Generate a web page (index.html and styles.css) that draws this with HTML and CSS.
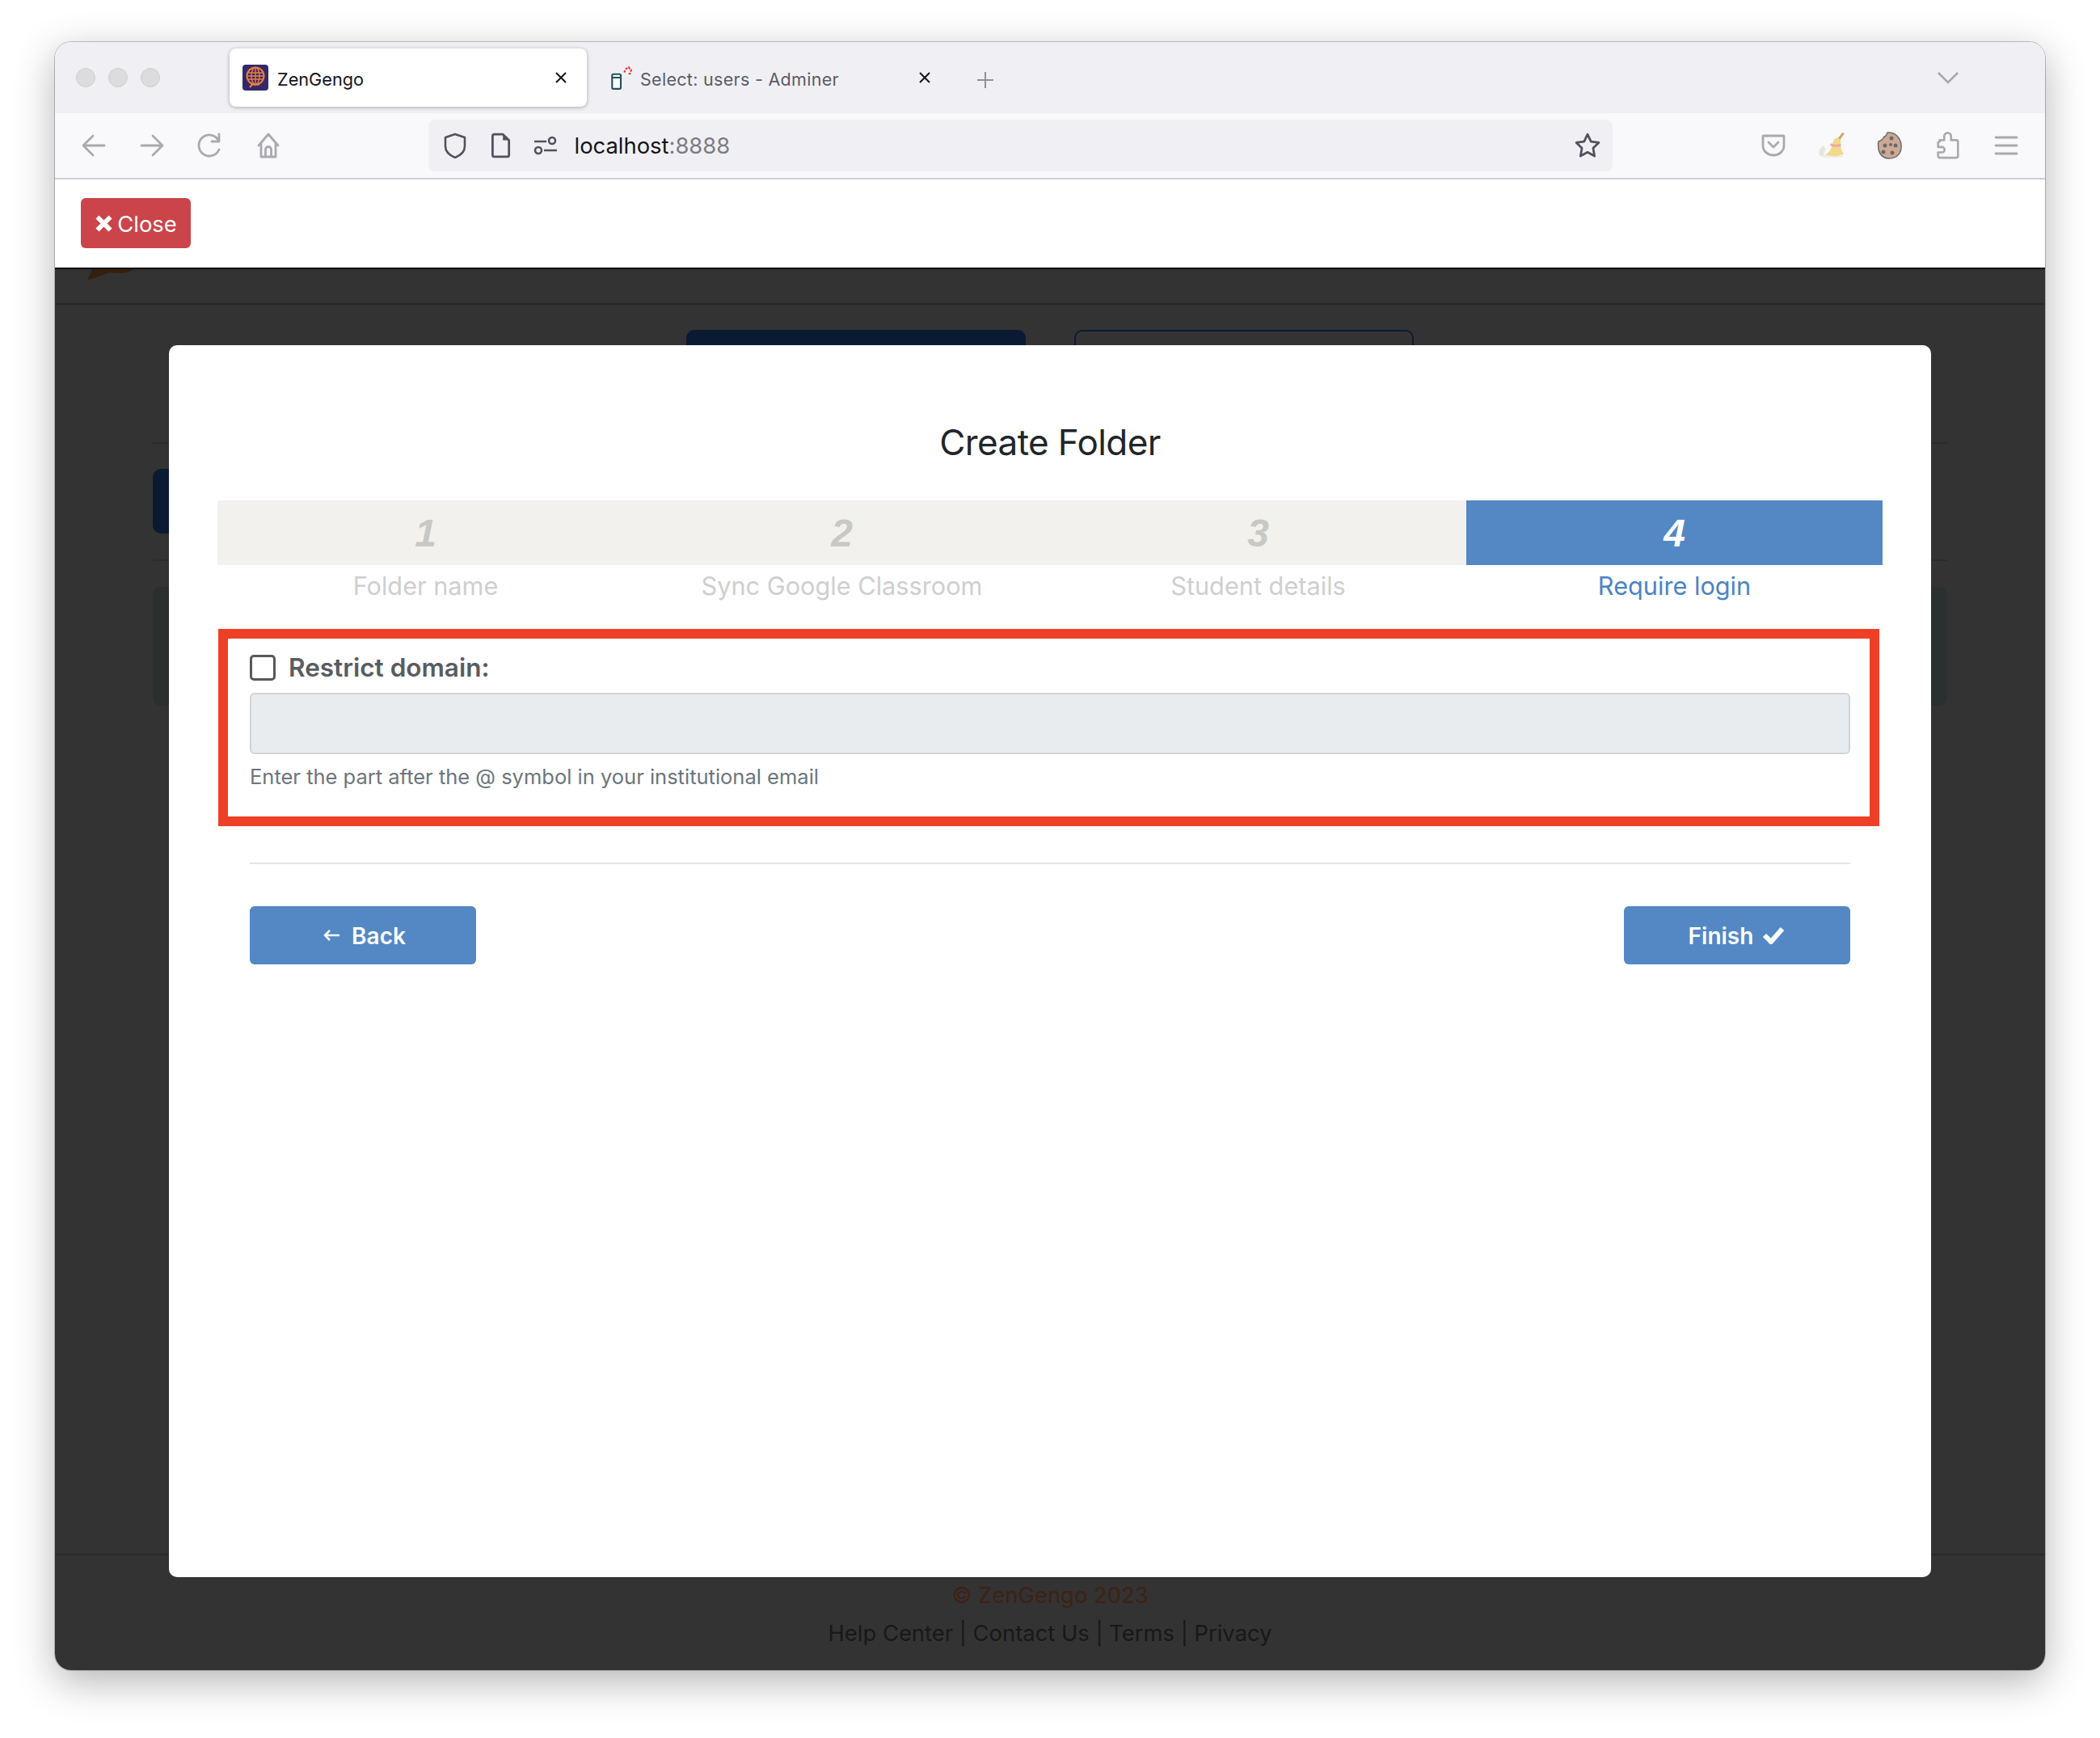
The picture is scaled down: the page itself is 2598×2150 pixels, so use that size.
FILE: index.html
```html
<!DOCTYPE html>
<html lang="en">
<head>
<meta charset="utf-8">
<title>ZenGengo</title>
<link rel="stylesheet" href="styles.css">
</head>
<body>
<div class="window">
  <div class="tabstrip">
    <div class="lights"><span class="light"></span><span class="light"></span><span class="light"></span></div>
    <div class="tab tab-active">
      <svg class="favicon" viewBox="0 0 32 32">
        <rect width="32" height="32" rx="4" fill="#33296a"/>
        <circle cx="16" cy="14" r="10.5" fill="none" stroke="#ee7f3a" stroke-width="2"/>
        <ellipse cx="16" cy="14" rx="5" ry="10.5" fill="none" stroke="#ee7f3a" stroke-width="1.4"/>
        <path d="M6 10h20M5.500 14h21M6 18h20M16 3.500v21" stroke="#ee7f3a" stroke-width="1.400" fill="none"/>
        <path d="M9 28l3-3.500h9" stroke="#ee7f3a" stroke-width="2" fill="none"/>
      </svg>
      <span class="tab-title">ZenGengo</span>
      <svg class="tab-x" viewBox="0 0 16 16"><path d="M2 2l12 12M14 2L2 14"/></svg>
    </div>
    <div class="tab tab-idle">
      <svg class="favicon-db" viewBox="0 0 28 28">
        <rect x="4" y="10" width="10" height="17" rx="1.500" fill="#fff" stroke="#23505f" stroke-width="2"/>
        <path d="M4 14h10" stroke="#23505f" stroke-width="2"/>
        <path d="M18 8l2-4 3-2 3 3-1 4-2 1" fill="none" stroke="#e5312f" stroke-width="2" stroke-dasharray="2.500 1.500"/>
      </svg>
      <span class="tab-title tab-title-idle">Select: users - Adminer</span>
      <svg class="tab-x" viewBox="0 0 16 16"><path d="M2 2l12 12M14 2L2 14"/></svg>
    </div>
    <svg class="plus" viewBox="0 0 24 24"><path d="M12 2v20M2 12h20"/></svg>
    <svg class="chevron" viewBox="0 0 26 16"><path d="M1 2l12 12L25 2"/></svg>
  </div>

  <div class="toolbar">
    <div class="icon-group">
      <svg class="tool" viewBox="0 0 32 32"><path d="M29 16H4M15 4L3 16l12 12"/></svg>
      <svg class="tool" viewBox="0 0 32 32"><path d="M3 16h25M17 4l12 12-12 12"/></svg>
      <svg class="tool" viewBox="0 0 32 32"><path d="M27 21a13 13 0 1 1-1-12M27 2v9h-9" /></svg>
      <svg class="tool" viewBox="0 0 32 32"><path d="M4 16L16 2l12 14M7 13v17h18V13M12.500 30v-9a3.500 3.500 0 0 1 7 0v9"/></svg>
    </div>
    <div class="urlbar">
      <svg class="url-icon" viewBox="0 0 30 32"><path d="M15 2l12 4v11c0 6-5 11-12 14C8 28 3 23 3 17V6z"/></svg>
      <svg class="url-icon" viewBox="0 0 24 30"><path d="M3 4a2 2 0 0 1 2-2h10l7 7v17a2 2 0 0 1-2 2H5a2 2 0 0 1-2-2z"/><path class="url-fill" d="M15 2l7 7h-7z"/></svg>
      <svg class="url-icon" viewBox="0 0 30 24"><path d="M1 7h15M13 18h16"/><circle cx="23" cy="6" r="4"/><circle cx="6" cy="18" r="4"/></svg>
      <span class="address"><span class="host">localhost</span><span class="port">:8888</span></span>
      <svg class="star" viewBox="1 1 30 30"><path d="M16 3l4 8.500 9 1.200-6.500 6.400 1.600 9.100L16 23.800 7.900 28.200l1.600-9.100L3 12.700l9-1.200z"/></svg>
    </div>
    <div class="icon-group">
      <svg class="tool" viewBox="0 0 32 32"><path d="M4 4h24a1 1 0 0 1 1 1v11c0 7-6 12-13 12S3 23 3 16V5a1 1 0 0 1 1-1zM10 12l6 6 6-6"/></svg>
      <svg class="ext" viewBox="0 0 34 36">
        <path d="M1 31c-2-5 1-10 5-13l3 4-3 11z" fill="#e2e8df"/>
        <ellipse cx="18" cy="32" rx="14" ry="2.500" fill="#eceee6"/>
        <path d="M34 2l-7 10-3-2 7-9z" fill="#cfa862"/>
        <path d="M23 8c3 0 6 2 6 5l0 5c0 4 1 8 4 11-2 1-3 2-5 1-1 2-3 1-5 2-2 0-3-1-5 0-2 0-3-1-5-1-1 0-3 0-4-1 5-3 8-8 9-14 1-4 2-7 5-8z" fill="#f0d88e"/>
        <path d="M16 15c4 2 8 2 13 1l0 3c-5 1-10 1-14-1z" fill="#eba8a0"/>
      </svg>
      <svg class="ext" viewBox="0 0 32 36">
        <path d="M13 2c-1 3-2 5-4 5-1 3-4 5-7 6-2 12 3 21 13 21 11 0 16-8 15-17C29 8 22 1 13 2z" fill="#cda995" stroke="#6a6a6e" stroke-width="1.500"/>
        <circle cx="18" cy="9" r="2.500" fill="#6a6a6e"/><circle cx="10" cy="18" r="2.500" fill="#6a6a6e"/><circle cx="23" cy="18" r="2.500" fill="#6a6a6e"/><circle cx="8" cy="26" r="2.500" fill="#6a6a6e"/><circle cx="19" cy="27" r="2.500" fill="#6a6a6e"/><circle cx="17" cy="17" r="2" fill="#6a6a6e"/>
      </svg>
      <svg class="tool" viewBox="0 0 32 36"><path d="M5 11h6V6a4.500 4.500 0 0 1 9 0v5h7a2 2 0 0 1 2 2v19a2 2 0 0 1-2 2H5a2 2 0 0 1-2-2v-5h5a3.500 3.500 0 0 0 0-7H3v-5a2 2 0 0 1 2-2z"/></svg>
      <svg class="tool" viewBox="0 0 32 32"><path d="M3 6h26M3 16h26M3 26h26"/></svg>
    </div>
  </div>

  <div class="closebar">
    <button class="btn-close" type="button">
      <svg class="close-x" viewBox="0 0 20 20"><path d="M3 3l14 14M17 3L3 17"/></svg><span class="btn-text">Close</span>
    </button>
  </div>

  <div class="page">
    <div class="bg-nav">
      <svg class="bg-logo" viewBox="0 0 58 14"><path d="M0 14L6 0h52c-8 5-18 6-30 4z"/></svg>
    </div>
    <div class="bg-main">
      <div class="bg-tabs">
        <div class="bg-tab bg-tab-solid"></div>
        <div class="bg-tab bg-tab-outline"></div>
      </div>
      <div class="bg-rule-block">
        <div class="bg-action"></div>
      </div>
      <div class="bg-card"></div>
    </div>
    <footer class="bg-footer">
      <div class="copyright">© ZenGengo 2023</div>
      <div class="links">Help Center | Contact Us | Terms | Privacy</div>
    </footer>

    <section class="modal">
      <h1 class="modal-title">Create Folder</h1>
      <div class="steps">
        <div class="step"><div class="step-num">1</div><div class="step-label">Folder name</div></div>
        <div class="step"><div class="step-num">2</div><div class="step-label">Sync Google Classroom</div></div>
        <div class="step"><div class="step-num">3</div><div class="step-label">Student details</div></div>
        <div class="step step-active"><div class="step-num">4</div><div class="step-label">Require login</div></div>
      </div>
      <div class="highlight">
        <label class="check-row"><input class="check" type="checkbox"><span>Restrict domain:</span></label>
        <input class="domain" type="text" disabled>
        <p class="help">Enter the part after the @ symbol in your institutional email</p>
      </div>
      <div class="modal-actions">
        <button class="btn-step" type="button">
          <svg class="back-arrow" viewBox="0 0 22 16"><path d="M21 8H3M9 2L3 8l6 6"/></svg><span class="btn-text">Back</span>
        </button>
        <button class="btn-step btn-finish" type="button"><span class="btn-text">Finish</span>
          <svg class="check-mark" viewBox="0 0 28 22"><path d="M3 11l8 8L25 3"/></svg>
        </button>
      </div>
    </section>
  </div>
</div>
</body>
</html>
```
FILE: styles.css
```css
* { box-sizing: border-box; }
html, body { margin: 0; height: 100%; }
body {
  background: #fff;
  padding: 52px 68px 84px;
  font-family: Inter, "Liberation Sans", sans-serif;
  overflow: hidden;
}
.window {
  height: 2014px;
  border-radius: 20px;
  overflow: hidden;
  display: flex;
  flex-direction: column;
  box-shadow: 0 0 0 1px rgba(0,0,0,.22), 0 14px 50px rgba(0,0,0,.3);
}

/* tab strip */
.tabstrip {
  height: 88px;
  flex: none;
  background: #f0f0f4;
  display: flex;
  align-items: flex-start;
  position: relative;
}
.lights {
  width: 216px;
  padding: 32px 0 0 26px;
  display: flex;
  gap: 16px;
}
.light {
  width: 24px;
  height: 24px;
  border-radius: 50%;
  background: #dcdcde;
  border: 1px solid #cfcfd1;
}
.tab {
  width: 442px;
  height: 72px;
  margin-top: 8px;
  display: flex;
  align-items: center;
  border-radius: 8px;
}
.tab-active {
  background: #fff;
  box-shadow: 0 1px 5px rgba(0,0,0,.3);
  padding-left: 16px;
}
.tab-idle { padding-left: 22px; width: 450px; }
.favicon { width: 32px; height: 32px; flex: none; }
.favicon-db { width: 30px; height: 30px; flex: none; margin-right: 9px; margin-left: 5px; }
.tab-title {
  margin-left: 11px;
  font-size: 21.700px;
  color: #15141a;
  flex: 1;
  padding-top: 4px;
}
.tab-title-idle { margin-left: 0; color: #5b5b66; font-size: 21.500px; letter-spacing: .3px; }
.tab-x { width: 16px; height: 16px; margin-right: 24px; margin-top: -1px; flex: none; fill: none; stroke: #15141a; stroke-width: 2; }
.plus { width: 24px; height: 24px; margin: 35px 0 0 31px; fill: none; stroke: #8f8f96; stroke-width: 2; }
.chevron { position: absolute; left: 2329px; top: 36px; width: 26px; height: 16px; fill: none; stroke: #a6a6ab; stroke-width: 2.500; }

/* toolbar */
.toolbar {
  height: 82px;
  flex: none;
  background: #f9f9fb;
  border-bottom: 2px solid #cfcfd8;
  display: flex;
  align-items: center;
  justify-content: space-between;
  padding: 0 32px 0 32px;
}
.icon-group { display: flex; align-items: center; gap: 40px; }
.tool { width: 32px; height: 34px; fill: none; stroke: #a9a9ae; stroke-width: 2.800; stroke-linejoin: round; stroke-linecap: round; flex: none; }
.ext { width: 32px; height: 36px; flex: none; }
.urlbar {
  width: 1465px;
  height: 64px;
  margin-left: -2px;
  background: #f0f0f4;
  border-radius: 8px;
  display: flex;
  align-items: center;
  padding: 0 15px 0 18px;
  gap: 26px;
}
.url-icon { width: 30px; height: 32px; fill: none; stroke: #52525e; stroke-width: 2.600; stroke-linejoin: round; flex: none; }
.url-fill { fill: #52525e; stroke: none; }
.address { flex: 1; font-size: 27.400px; margin-left: -5px; }
.host { color: #15141a; }
.port { color: #7b7b85; }
.star { width: 32px; height: 32px; fill: none; stroke: #52525e; stroke-width: 2.600; stroke-linejoin: round; flex: none; }

/* close bar */
.closebar {
  height: 111px;
  flex: none;
  background: #fff;
  border-bottom: 2px solid #000;
  padding: 23px 0 0 32px;
}
.btn-close {
  width: 136px;
  height: 62px;
  padding: 0;
  border: 0;
  border-radius: 6px;
  background: #cb444a;
  color: #fff;
  font: 400 27.400px Inter, "Liberation Sans", sans-serif;
  display: flex;
  align-items: center;
  justify-content: center;
  gap: 5px;
}
.btn-text { padding-top: 2px; }
.close-x { width: 23px; height: 23px; fill: none; stroke: #fff; stroke-width: 5; }

/* dimmed page */
.page {
  flex: 1;
  position: relative;
  background: #333;
  display: flex;
  flex-direction: column;
  overflow: hidden;
}
.bg-nav {
  height: 44px;
  flex: none;
  border-bottom: 2px solid #282828;
  padding-left: 40px;
}
.bg-logo { display: block; width: 58px; height: 14px; fill: #35200f; }
.bg-main { flex: 1; padding: 31px 121px 0; }
.bg-tabs { display: flex; justify-content: center; gap: 60px; height: 139px; }
.bg-tab { width: 420px; height: 100px; border-radius: 10px; }
.bg-tab-solid { background: #0a1a33; }
.bg-tab-outline { border: 2px solid #0a1a33; }
.bg-rule-block {
  border-top: 2px solid #2c2c2c;
  border-bottom: 2px solid #2c2c2c;
  padding: 31px 0;
  height: 147px;
}
.bg-action { width: 260px; height: 80px; background: #0a1a33; border-radius: 10px; }
.bg-card { height: 147px; margin-top: 32px; background: #2b2f30; border-radius: 10px; }
.bg-footer {
  height: 144px;
  flex: none;
  border-top: 2px solid #2a2a2a;
  text-align: center;
  font-size: 27.400px;
  padding-top: 33px;
}
.copyright { color: #3f2115; line-height: 32px; }
.links { color: #181818; line-height: 32px; margin-top: 15px; }

/* modal */
.modal {
  position: absolute;
  left: 141px;
  top: 94px;
  width: 2180px;
  height: 1524px;
  background: #fff;
  border-radius: 10px;
  padding: 88px 60px 0;
}
.modal-title {
  margin: 0;
  height: 104px;
  line-height: 64px;
  font-size: 44px;
  font-weight: 400;
  letter-spacing: -.6px;
  color: #212529;
  text-align: center;
}
.steps { display: grid; grid-template-columns: repeat(4, 1fr); height: 159px; }
.step { text-align: center; }
.step-num {
  height: 80px;
  background: #f2f1ed;
  color: #c8c8c4;
  font: italic 700 48px/82px "Liberation Sans", sans-serif;
}
.step-label { margin-top: 2px; font-size: 30.700px; line-height: 48px; color: #cfcfcf; }
.step-active .step-num { background: #5388c4; color: #fff; }
.step-active .step-label { color: #4a84c4; }
.highlight {
  width: 2055px;
  height: 244px;
  margin-left: 1px;
  border: 12px solid #ee4026;
  padding: 19px 24px 0 27px;
}
.check-row { display: flex; align-items: center; gap: 16px; height: 34px; font-size: 31.500px; font-weight: 600; color: #595c5f; }
.check-row span { margin-top: -2px; }
.check {
  appearance: none;
  width: 32px;
  height: 32px;
  margin: 0;
  background: #fff;
  border: 3px solid #55595c;
  border-radius: 5px;
}
.domain {
  display: block;
  width: 1980px;
  height: 76px;
  margin-top: 14px;
  background: #e9ecef;
  border: 2px solid #ced4da;
  border-radius: 6px;
}
.help { margin: 13px 0 0; font-size: 25.500px; line-height: 30px; color: #6c757d; }
.modal-actions {
  width: 1980px;
  margin: 45px 0 0 40px;
  padding-top: 52px;
  border-top: 2px solid #e4e5e6;
  display: flex;
  justify-content: space-between;
}
.btn-step {
  width: 280px;
  height: 72px;
  padding: 0;
  border: 0;
  border-radius: 6px;
  background: #5388c4;
  color: #fff;
  font: 600 28px Inter, "Liberation Sans", sans-serif;
  display: flex;
  align-items: center;
  justify-content: center;
  gap: 14px;
}
.btn-finish { gap: 11px; padding-right: 1px; }
.back-arrow { width: 22px; height: 16px; margin-left: 3px; fill: none; stroke: #fff; stroke-width: 2.500; }
.check-mark { width: 28px; height: 22px; fill: none; stroke: #fff; stroke-width: 6; }
```
